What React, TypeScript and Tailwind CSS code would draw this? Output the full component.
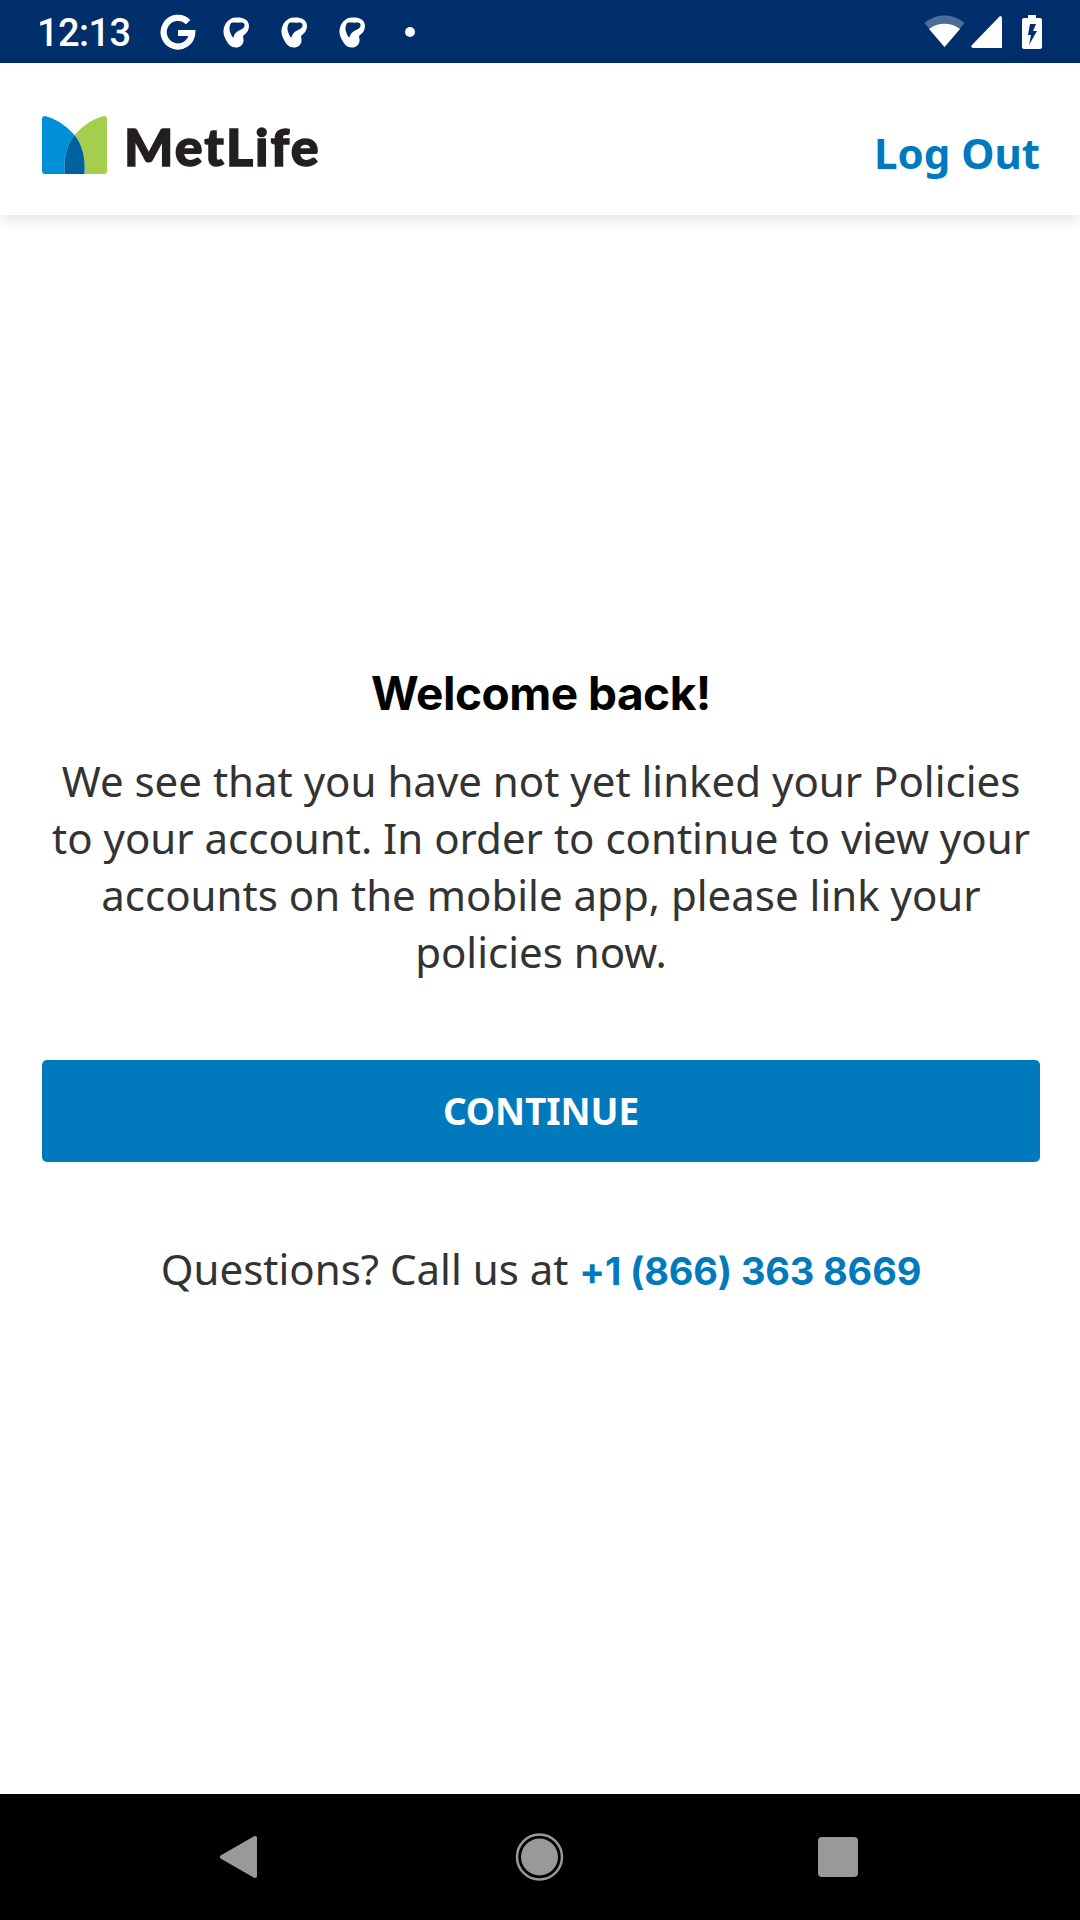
function StatusBar() {
  return (
    <div className="flex h-[63px] shrink-0 items-center bg-[#002f6c] text-white">
      <span className="ml-[37px] w-[94px] whitespace-nowrap pt-[4px] font-['Roboto'] text-[38px] font-medium leading-[63px] tracking-[-0.6px]">12:13</span>
      <svg className="ml-[28px]" width="38" height="38" viewBox="0 0 38 38" fill="none">
        <path d="M29.2 9.2A14.3 14.3 0 1 0 33.2 20H19" stroke="white" strokeWidth="6.2" />
      </svg>
      {[0, 1, 2].map((i) => (
        <svg key={i} className="ml-[25px] mr-[4px]" width="29" height="32" viewBox="0 0 29 32">
          <path fillRule="evenodd" fill="white" d="M14 1.500C20 1 27 3 27 10C27 14 25 17 22 19C20 20.500 22 22 21.500 25C21 29 18 31.500 14 31.500C9 31.500 6 28 3.500 23C.5 17 1 12 4 7C6.500 3.500 10 1.500 14 1.500ZM9 7C7 10 7 14 8.500 17C9.500 19.500 10 21 11.500 21.500C12 18.500 14 15.500 18 14C21 13 23 11 22.500 8.500C22 7 21 6.500 19 6.500C15 7 12 6 9 7Z" />
        </svg>
      ))}
      <span className="ml-[34px] size-[10px] rounded-full bg-white" />
      <svg className="ml-auto mr-[6px]" width="41" height="34" viewBox="0 0 41 34">
        <path d="M.5 8C12-2 29-2 40.500 8L20.500 32Z" fill="#4d6d98" />
        <path d="M5 14C14 7 27 7 36 14L20.500 32Z" fill="white" />
      </svg>
      <svg className="mr-[20px]" width="31" height="32" viewBox="0 0 31 32"><path d="M29 0Q31 0 31 2V32H2Q-1 31 1 29Z" fill="white" /></svg>
      <svg className="mr-[38px]" width="20" height="34" viewBox="0 0 20 34">
        <path fillRule="evenodd" fill="white" d="M6 0H14V3H18Q20 3 20 5V32Q20 34 18 34H2Q0 34 0 32V5Q0 3 2 3H6ZM8 9L6 20H9L7 30L15 16H11L14 9Z" />
      </svg>
    </div>
  );
}

function Logo() {
  return (
    <div className="flex items-start">
      <svg width="65" height="58" viewBox="0 0 65 58">
        <path d="M0 3Q0 0 3 0Q18 3 32.500 19Q21 33 22.500 58H3Q0 58 0 55Z" fill="#0090da" />
        <path d="M65 3Q65 0 62 0Q47 3 32.500 19Q44 33 42.500 58H62Q65 58 65 55Z" fill="#a4ce4e" />
        <path d="M32.500 19Q21 33 22.500 58H42.500Q44 33 32.500 19Z" fill="#0061a0" />
      </svg>
      <span className="ml-[17px] whitespace-nowrap font-['Lato'] text-[52px] font-black leading-[60px] tracking-[2px] text-[#231f20] [-webkit-text-stroke:1.4px_#231f20]">MetLife</span>
    </div>
  );
}

export default function App() {
  return (
    <div className="flex h-[1920px] w-[1080px] flex-col overflow-hidden bg-white font-['Noto_Sans',sans-serif]">
      <StatusBar />
      <header className="flex h-[152px] shrink-0 items-start justify-between pl-[42px] pr-[40px] shadow-[0_4px_14px_rgba(0,0,0,0.12)]">
        <div className="pt-[53px]"><Logo /></div>
        <button className="mt-[61px] text-[42px] font-bold leading-[57px] text-[#007abc]">Log Out</button>
      </header>
      <main className="flex flex-1 flex-col pl-[42px] pr-[40px] pt-[449px] text-center text-[#333333]">
        <h1 className="font-['Inter'] text-[46px] font-bold leading-[58px] tracking-[-0.5px] text-black">Welcome back!</h1>
        <p className="mt-[30px] text-[42px] leading-[57px]">
          We see that you have not yet linked your Policies<br />to your account. In order to continue to view your<br />accounts on the mobile app, please link your<br />policies now.
        </p>
        <button className="mt-[80px] h-[102px] rounded-[5px] bg-[#007abc] text-[37px] font-bold tracking-[-0.1px] text-white">CONTINUE</button>
        <p className="mt-[78px] whitespace-nowrap text-[42px] leading-[57px]">
          Questions? Call us at <a className="font-['Inter'] text-[38px] font-bold tracking-[-0.15px] text-[#007abc]">+1 (866) 363 8669</a>
        </p>
      </main>
      <nav className="flex h-[126px] shrink-0 items-center bg-black">
        <svg className="ml-[219px]" width="39" height="44" viewBox="0 0 39 44"><path d="M36 3V41L3 22Z" fill="#999" stroke="#999" strokeWidth="4" strokeLinejoin="round" /></svg>
        <svg className="ml-[257px]" width="49" height="48" viewBox="0 0 49 48"><circle cx="24.500" cy="24" r="22.500" fill="none" stroke="#999" strokeWidth="2.500" /><circle cx="24.500" cy="24" r="18.500" fill="#999" /></svg>
        <span className="ml-[254px] size-[40px] rounded-[4px] bg-[#999999]" />
      </nav>
    </div>
  );
}
